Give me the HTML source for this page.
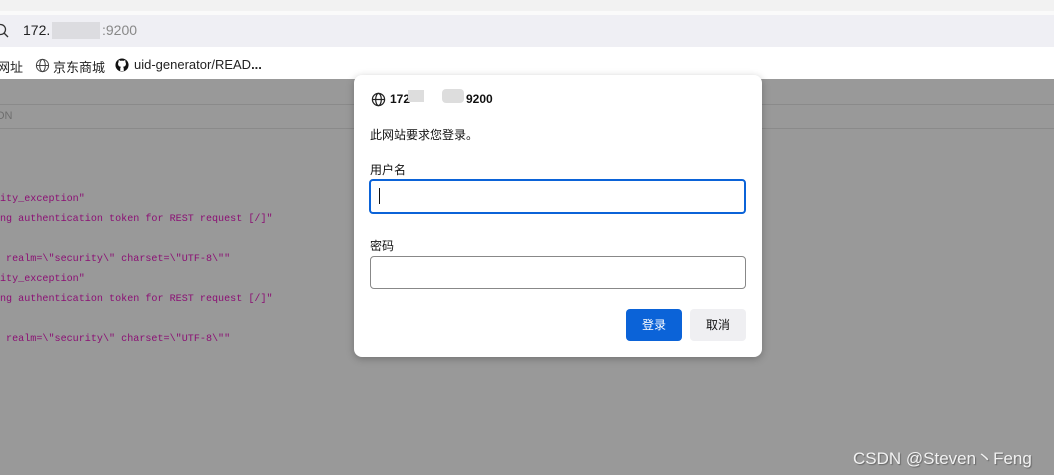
<!DOCTYPE html>
<html><head><meta charset="utf-8"><style>
*{margin:0;padding:0;box-sizing:border-box}
body{width:1054px;height:475px;overflow:hidden;background:#999999;font-family:"Liberation Sans","Noto Sans CJK SC",sans-serif;position:relative}
.a{position:absolute}
.mono{font-family:"Liberation Mono",monospace;font-size:10.1px;color:#8b0f74;white-space:pre}
</style></head><body>
<div class="a" style="left:0;top:0;width:1054px;height:11px;background:#f2f2f2"></div>
<div class="a" style="left:0;top:11px;width:1054px;height:4px;background:#fafafa"></div>
<div class="a" style="left:0;top:15px;width:1054px;height:32px;background:#efeff4"></div>
<svg class="a" style="left:-6px;top:23px" width="16" height="16" viewBox="0 0 16 16"><circle cx="6.5" cy="6.5" r="5" fill="none" stroke="#333" stroke-width="1.3"/><path d="M10 10l4 4" stroke="#333" stroke-width="1.3"/></svg>
<div class="a" style="left:23px;top:22px;font-size:14px;color:#222">172.</div>
<div class="a" style="left:52px;top:22px;width:48px;height:17px;background:#dcdce0"></div>
<div class="a" style="left:102px;top:22px;font-size:14px;color:#888">:9200</div>
<div class="a" style="left:0;top:47px;width:1054px;height:32px;background:#fff"></div>
<div class="a" style="left:-3px;top:57px;font-size:13px;color:#222">网址</div>
<svg class="a" style="left:35px;top:58px" width="15" height="15" viewBox="0 0 16 16" fill="none" stroke="#444" stroke-width="1.1"><circle cx="8" cy="8" r="6.5"/><ellipse cx="8" cy="8" rx="3" ry="6.5"/><path d="M1.5 8h13"/></svg>
<div class="a" style="left:53px;top:57px;font-size:13px;color:#222">京东商城</div>
<svg class="a" style="left:115px;top:58px" width="14" height="14" viewBox="0 0 16 16"><circle cx="8" cy="8" r="7.5" fill="#111"/><path d="M6 15v-3c0-1 .5-1.5 1-2-2-.2-3.5-1-3.5-3.5 0-.8.3-1.4.7-1.9-.1-.3-.3-1 .1-2 0 0 .7-.2 2 .7a6.5 6.5 0 0 1 3.4 0c1.3-.9 2-.7 2-.7.4 1 .2 1.7.1 2 .4.5.7 1.1.7 1.9 0 2.5-1.5 3.3-3.5 3.5.5.5 1 1 1 2v3z" fill="#fff"/></svg>
<div class="a" style="left:134px;top:57px;font-size:13px;color:#222">uid-generator/READ<b>...</b></div>
<div class="a" style="left:0;top:104px;width:1054px;height:1px;background:#8a8a8a"></div>
<div class="a" style="left:-4px;top:110px;font-size:11px;color:#6e6e6e">ON</div>
<div class="a" style="left:0;top:128px;width:1054px;height:1px;background:#8a8a8a"></div>
<div class="a mono" style="left:0;top:194px">ity_exception"</div>
<div class="a mono" style="left:0;top:214px">ng authentication token for REST request [/]"</div>
<div class="a mono" style="left:0;top:254px"> realm=\"security\" charset=\"UTF-8\""</div>
<div class="a mono" style="left:0;top:274px">ity_exception"</div>
<div class="a mono" style="left:0;top:294px">ng authentication token for REST request [/]"</div>
<div class="a mono" style="left:0;top:334px"> realm=\"security\" charset=\"UTF-8\""</div>
<div class="a" style="left:354px;top:75px;width:408px;height:282px;background:#fff;border-radius:8px;box-shadow:0 2px 8px rgba(0,0,0,.25)"></div>
<svg class="a" style="left:371px;top:92px" width="15" height="15" viewBox="0 0 16 16" fill="none" stroke="#222" stroke-width="1.3"><circle cx="8" cy="8" r="6.5"/><ellipse cx="8" cy="8" rx="3" ry="6.5"/><path d="M1.5 8h13"/></svg>
<div class="a" style="left:390px;top:92px;font-size:12px;font-weight:bold;color:#111">172</div>
<div class="a" style="left:408px;top:90px;width:16px;height:12px;background:#ddd"></div>
<div class="a" style="left:442px;top:89px;width:22px;height:14px;background:#ddd;border-radius:4px"></div>
<div class="a" style="left:466px;top:92px;font-size:12px;font-weight:bold;color:#111">9200</div>
<div class="a" style="left:370px;top:126px;font-size:12px;color:#111">此网站要求您登录。</div>
<div class="a" style="left:370px;top:161px;font-size:12px;color:#111">用户名</div>
<div class="a" style="left:369px;top:179px;width:377px;height:35px;border:2px solid #0b63d8;border-radius:4px"></div>
<div class="a" style="left:379px;top:188px;width:1px;height:16px;background:#111"></div>
<div class="a" style="left:370px;top:237px;font-size:12px;color:#111">密码</div>
<div class="a" style="left:370px;top:256px;width:376px;height:33px;border:1px solid #888;border-radius:4px"></div>
<div class="a" style="left:626px;top:309px;width:56px;height:32px;background:#0b63d8;border-radius:4px;color:#fff;font-size:12px;text-align:center;line-height:32px">登录</div>
<div class="a" style="left:690px;top:309px;width:56px;height:32px;background:#efeff2;border-radius:4px;color:#111;font-size:12px;text-align:center;line-height:32px">取消</div>
<div class="a" style="left:853px;top:444px;font-size:17px;color:#f2f2f2;text-shadow:1px 1px 1px #666">CSDN @Steven丶Feng</div>
</body></html>
